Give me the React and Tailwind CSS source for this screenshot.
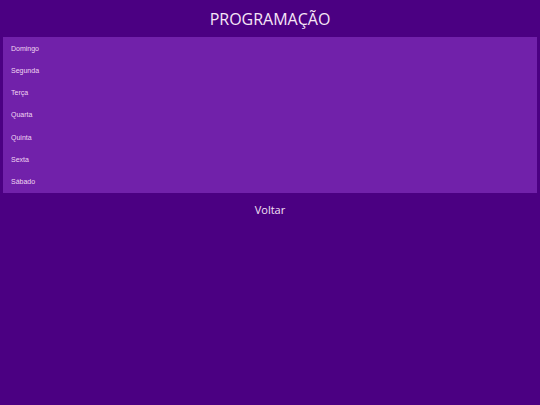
const DAYS = ['Domingo', 'Segunda', 'Terça', 'Quarta', 'Quinta', 'Sexta', 'Sábado']

export default function App() {
  return (
    <div className="min-h-[405px] bg-[#4b0082] flex flex-col" style={{ fontFamily: '"Open Sans", sans-serif' }}>
      <header className="h-[37px] flex items-center justify-center">
        <h1 className="text-[16px] leading-none text-[#f7e6f7]">PROGRAMAÇÃO</h1>
      </header>
      <ul className="mx-[3px] bg-[#7121aa] pt-[1px]">
        {DAYS.map(d => (
          <li
            key={d}
            className="h-[22.2px] flex items-center pl-[8px] text-[7px] text-[#f0d6f2]"
            style={{ fontFamily: '"Liberation Sans", Arial, sans-serif' }}
          >
            {d}
          </li>
        ))}
      </ul>
      <div className="flex justify-center pt-[9px]">
        <button className="text-[11px] text-[#f3e0f5]">Voltar</button>
      </div>
    </div>
  )
}
